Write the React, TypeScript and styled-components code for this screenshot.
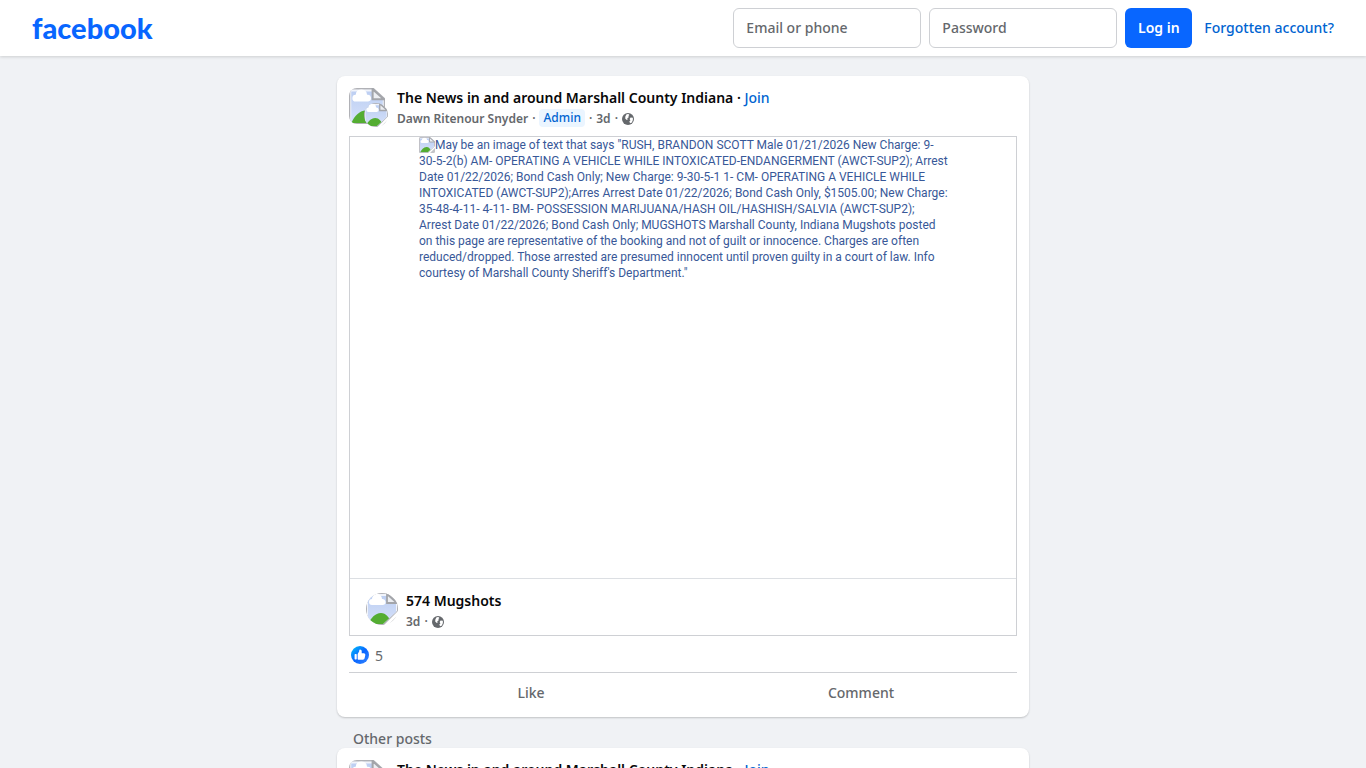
import React, { useId } from "react";
import styled, { createGlobalStyle } from "styled-components";

const GlobalStyle = createGlobalStyle`
  *, *::before, *::after { box-sizing: border-box; }
  body {
    margin: 0;
    background: #f0f2f5;
    color: #080809;
    font-family: "Noto Sans", "Open Sans", sans-serif;
    font-size: 14px;
  }
  button, input { font: inherit; }
  h1, h2, p { margin: 0; }
`;

const Page = styled.div`
  height: 100vh;
  overflow: hidden;
`;

const TopBar = styled.header`
  position: relative;
  display: flex;
  align-items: center;
  justify-content: space-between;
  height: 56px;
  padding: 0 32px;
  background: #fff;
  box-shadow: 0 1px 3px rgba(0, 0, 0, 0.15);
`;

const Logo = styled.a`
  color: #0866ff;
  font-family: Lato, sans-serif;
  font-size: 29px;
  line-height: 36px;
  font-weight: 900;
  text-decoration: none;
`;

const LoginForm = styled.form`
  display: flex;
  align-items: center;
  gap: 8px;
`;

const Field = styled.input`
  width: 188px;
  height: 40px;
  padding: 0 12px 2px;
  border: 1px solid #ced0d4;
  border-radius: 6px;
  background: #fff;
  font-weight: 500;
  &::placeholder { color: #65686c; opacity: 1; }
`;

const LoginButton = styled.button`
  width: 67px;
  height: 40px;
  padding: 0 0 2px;
  border: 0;
  border-radius: 6px;
  background: #0866ff;
  color: #fff;
  font-weight: 600;
`;

const TextLink = styled.a`
  color: #0064d1;
  font-weight: 500;
  text-decoration: none;
`;

const ForgotLink = styled(TextLink)`
  margin-left: 4px;
  padding-bottom: 2px;
`;

const Feed = styled.main`
  width: 692px;
  max-width: 100%;
  margin: 20px auto 0;
`;

const Card = styled.article`
  padding: 12px 12px 8px;
  border-radius: 8px;
  background: #fff;
  box-shadow: 0 1px 2px rgba(0, 0, 0, 0.2);
`;

const PostHead = styled.div`
  display: flex;
  gap: 8px;
  height: 48px;
`;

const AvatarStack = styled.div`
  position: relative;
  width: 40px;
  height: 40px;
`;

const Avatar = styled.span<{ $size: number; $round?: boolean; $badge?: boolean }>`
  display: block;
  flex: none;
  width: ${(p) => p.$size}px;
  height: ${(p) => p.$size}px;
  overflow: hidden;
  border-radius: ${(p) => (p.$round ? "50%" : "8px")};
  ${(p) => p.$badge && "position: absolute; right: 1px; bottom: 1px;"}
  svg { display: block; width: 100%; height: 100%; }
`;

const HeadText = styled.div`
  min-width: 0;
`;

const Title = styled.h2`
  font-size: 14px;
  line-height: 20px;
  font-weight: 600;
`;

const Meta = styled.p`
  display: flex;
  align-items: center;
  gap: 4px;
  padding-top: 1px;
  color: #65686c;
  font-size: 12px;
  line-height: 20px;
  font-weight: 600;
  svg { display: block; }
`;

const AdminBadge = styled.span`
  margin-bottom: 2px;
  padding: 0 4px;
  border-radius: 4px;
  background: #ebf5ff;
  color: #0064d1;
  line-height: 18px;
  font-weight: 500;
`;

const Attachment = styled.section`
  border: 1px solid #ced0d4;
`;

const Photo = styled.a`
  display: block;
  height: 441px;
  color: #385898;
  font-family: Roboto, "Noto Sans", sans-serif;
  font-size: 12px;
  line-height: 16px;
  text-decoration: none;
`;

const AltText = styled.span`
  display: block;
  width: 528px;
  max-width: 100%;
  margin: 0 auto;
  white-space: pre;
  svg { width: 16px; height: 16px; vertical-align: top; }
`;

const Shared = styled.div`
  display: flex;
  align-items: center;
  gap: 8px;
  height: 57px;
  padding: 4px 16px 0;
  border-top: 1px solid #dcdfe3;
`;

const SharedText = styled(HeadText)`
  padding-top: 4px;
`;

const Reactions = styled.div`
  display: flex;
  align-items: center;
  gap: 6px;
  height: 37px;
  padding: 2px 2px 0;
  border-bottom: 1px solid #ced0d4;
  color: #65686c;
`;

const Actions = styled.div`
  display: flex;
  padding: 4px 4px 0;
`;

const ActionButton = styled.button`
  flex: 1;
  height: 32px;
  padding: 0 0 2px 26px;
  border: 0;
  background: transparent;
  color: #65686c;
  font-weight: 500;
`;

const SectionTitle = styled.h2`
  height: 31px;
  padding: 12px 16px 0;
  color: #65686c;
  font-size: 14px;
  line-height: 19px;
  font-weight: 500;
`;

function BrokenImage() {
  const id = useId();
  return (
    <svg viewBox="0 0 32 32" aria-hidden="true">
      <defs>
        <clipPath id={id}>
          <path d="M3 1h18l10 9v8L17 31H3a2 2 0 0 1-2-2V3a2 2 0 0 1 2-2Z" />
        </clipPath>
        <linearGradient id={`${id}-sky`} x1="0" y1="0" x2="0" y2="1">
          <stop stopColor="#bdcff2" />
          <stop offset="1" stopColor="#d6e1fa" />
        </linearGradient>
      </defs>
      <path d="M3 0h19l10 9v9L18 32H3a3 3 0 0 1-3-3V3a3 3 0 0 1 3-3Z" fill="#b0b1b6" />
      <g clipPath={`url(#${id})`}>
        <path d="M0 0h32v32H0Z" fill="#f1f4fb" />
        <path d="M2 3h28v28H2Z" fill={`url(#${id}-sky)`} />
        <path d="M6 12a3 3 0 0 1 0-6 5 5 0 0 1 10 0 3 3 0 0 1 1 6Z" fill="#fff" />
        <path d="M2 31c3-6 7-11 13-11 5 0 8 4 11 11Z" fill="#54ad32" />
        <path d="M19 32 32 19v13Z" fill="#fff" />
      </g>
      <path d="M21 1v9h10Z" fill="#eceef2" stroke="#a3a5aa" strokeWidth="1.8" />
      <path d="M32 22v7a3 3 0 0 1-3 3h-7Z" fill="#c3c4c8" />
    </svg>
  );
}

function Globe() {
  return (
    <svg width="12" height="12" viewBox="0 0 12 12" role="img" aria-label="Public">
      <circle cx="6" cy="6" r="6" fill="#65686c" />
      <path d="M4.6 1.2 6.4 1 7.4 2 6.4 3 6.8 4.2 5.2 5.2 5.8 6.2 4.8 7 3.2 5.4 3.4 3.2Z" fill="#fff" />
      <path d="M8.6 4.6 10.8 4.8C11.1 6.4 10.8 8 9.8 9.4L8.4 10.2 7.2 8.8 8.4 7.4 7.6 6Z" fill="#fff" />
    </svg>
  );
}

function LikeBadge() {
  return (
    <svg width="18" height="18" viewBox="0 0 16 16" role="img" aria-label="Like">
      <defs>
        <linearGradient id="likeFill" x1="2" y1="2" x2="14" y2="14" gradientUnits="userSpaceOnUse">
          <stop stopColor="#02adfc" />
          <stop offset="0.5" stopColor="#0866ff" />
          <stop offset="1" stopColor="#2b7eff" />
        </linearGradient>
      </defs>
      <circle cx="8" cy="8" r="8" fill="url(#likeFill)" />
      <path
        d="M7.3 3.9a.75.75 0 0 1 .75-.75c.81 0 1.47.66 1.47 1.47v1.54a.2.2 0 0 0 .2.2h1.6c.9 0 1.58.82 1.4 1.7l-.6 2.9a1.6 1.6 0 0 1-1.57 1.29H6.5a.6.6 0 0 1-.6-.6V7.6c0-.33.1-.66.27-.95l.79-1.3c.22-.36.34-.78.34-1.2ZM3.7 7.2c-.3 0-.54.24-.54.54v3.6c0 .3.24.55.54.55h.87c.3 0 .54-.24.54-.54V7.74a.54.54 0 0 0-.54-.54Z"
        fill="#fff"
      />
    </svg>
  );
}

const altText = `May be an image of text that says "RUSH, BRANDON SCOTT Male 01/21/2026 New Charge: 9-
30-5-2(b) AM- OPERATING A VEHICLE WHILE INTOXICATED-ENDANGERMENT (AWCT-SUP2); Arrest
Date 01/22/2026; Bond Cash Only; New Charge: 9-30-5-1 1- CM- OPERATING A VEHICLE WHILE
INTOXICATED (AWCT-SUP2);Arres Arrest Date 01/22/2026; Bond Cash Only, $1505.00; New Charge:
35-48-4-11- 4-11- BM- POSSESSION MARIJUANA/HASH OIL/HASHISH/SALVIA (AWCT-SUP2);
Arrest Date 01/22/2026; Bond Cash Only; MUGSHOTS Marshall County, Indiana Mugshots posted
on this page are representative of the booking and not of guilt or innocence. Charges are often
reduced/dropped. Those arrested are presumed innocent until proven guilty in a court of law. Info
courtesy of Marshall County Sheriff's Department."`;

function PostHeader() {
  return (
    <PostHead>
      <AvatarStack>
        <Avatar $size={36}><BrokenImage /></Avatar>
        <Avatar $size={24} $round $badge><BrokenImage /></Avatar>
      </AvatarStack>
      <HeadText>
        <Title>
          The News in and around Marshall County Indiana · <TextLink href="#join">Join</TextLink>
        </Title>
        <Meta>
          <span>Dawn Ritenour Snyder</span>
          <span>·</span>
          <AdminBadge>Admin</AdminBadge>
          <span>·</span>
          <span>3d</span>
          <span>·</span>
          <Globe />
        </Meta>
      </HeadText>
    </PostHead>
  );
}

export default function App() {
  return (
    <Page>
      <GlobalStyle />
      <TopBar>
        <Logo href="#home">facebook</Logo>
        <LoginForm onSubmit={(e) => e.preventDefault()}>
          <Field type="text" placeholder="Email or phone" aria-label="Email or phone" />
          <Field type="password" placeholder="Password" aria-label="Password" />
          <LoginButton type="submit">Log in</LoginButton>
          <ForgotLink href="#recover">Forgotten account?</ForgotLink>
        </LoginForm>
      </TopBar>
      <Feed>
        <Card>
          <PostHeader />
          <Attachment>
            <Photo href="#photo">
              <AltText><BrokenImage />{altText}</AltText>
            </Photo>
            <Shared>
              <Avatar $size={32} $round><BrokenImage /></Avatar>
              <SharedText>
                <Title>574 Mugshots</Title>
                <Meta>
                  <span>3d</span>
                  <span>·</span>
                  <Globe />
                </Meta>
              </SharedText>
            </Shared>
          </Attachment>
          <Reactions>
            <LikeBadge />
            <span>5</span>
          </Reactions>
          <Actions>
            <ActionButton type="button">Like</ActionButton>
            <ActionButton type="button">Comment</ActionButton>
          </Actions>
        </Card>
        <SectionTitle>Other posts</SectionTitle>
        <Card>
          <PostHeader />
        </Card>
      </Feed>
    </Page>
  );
}
